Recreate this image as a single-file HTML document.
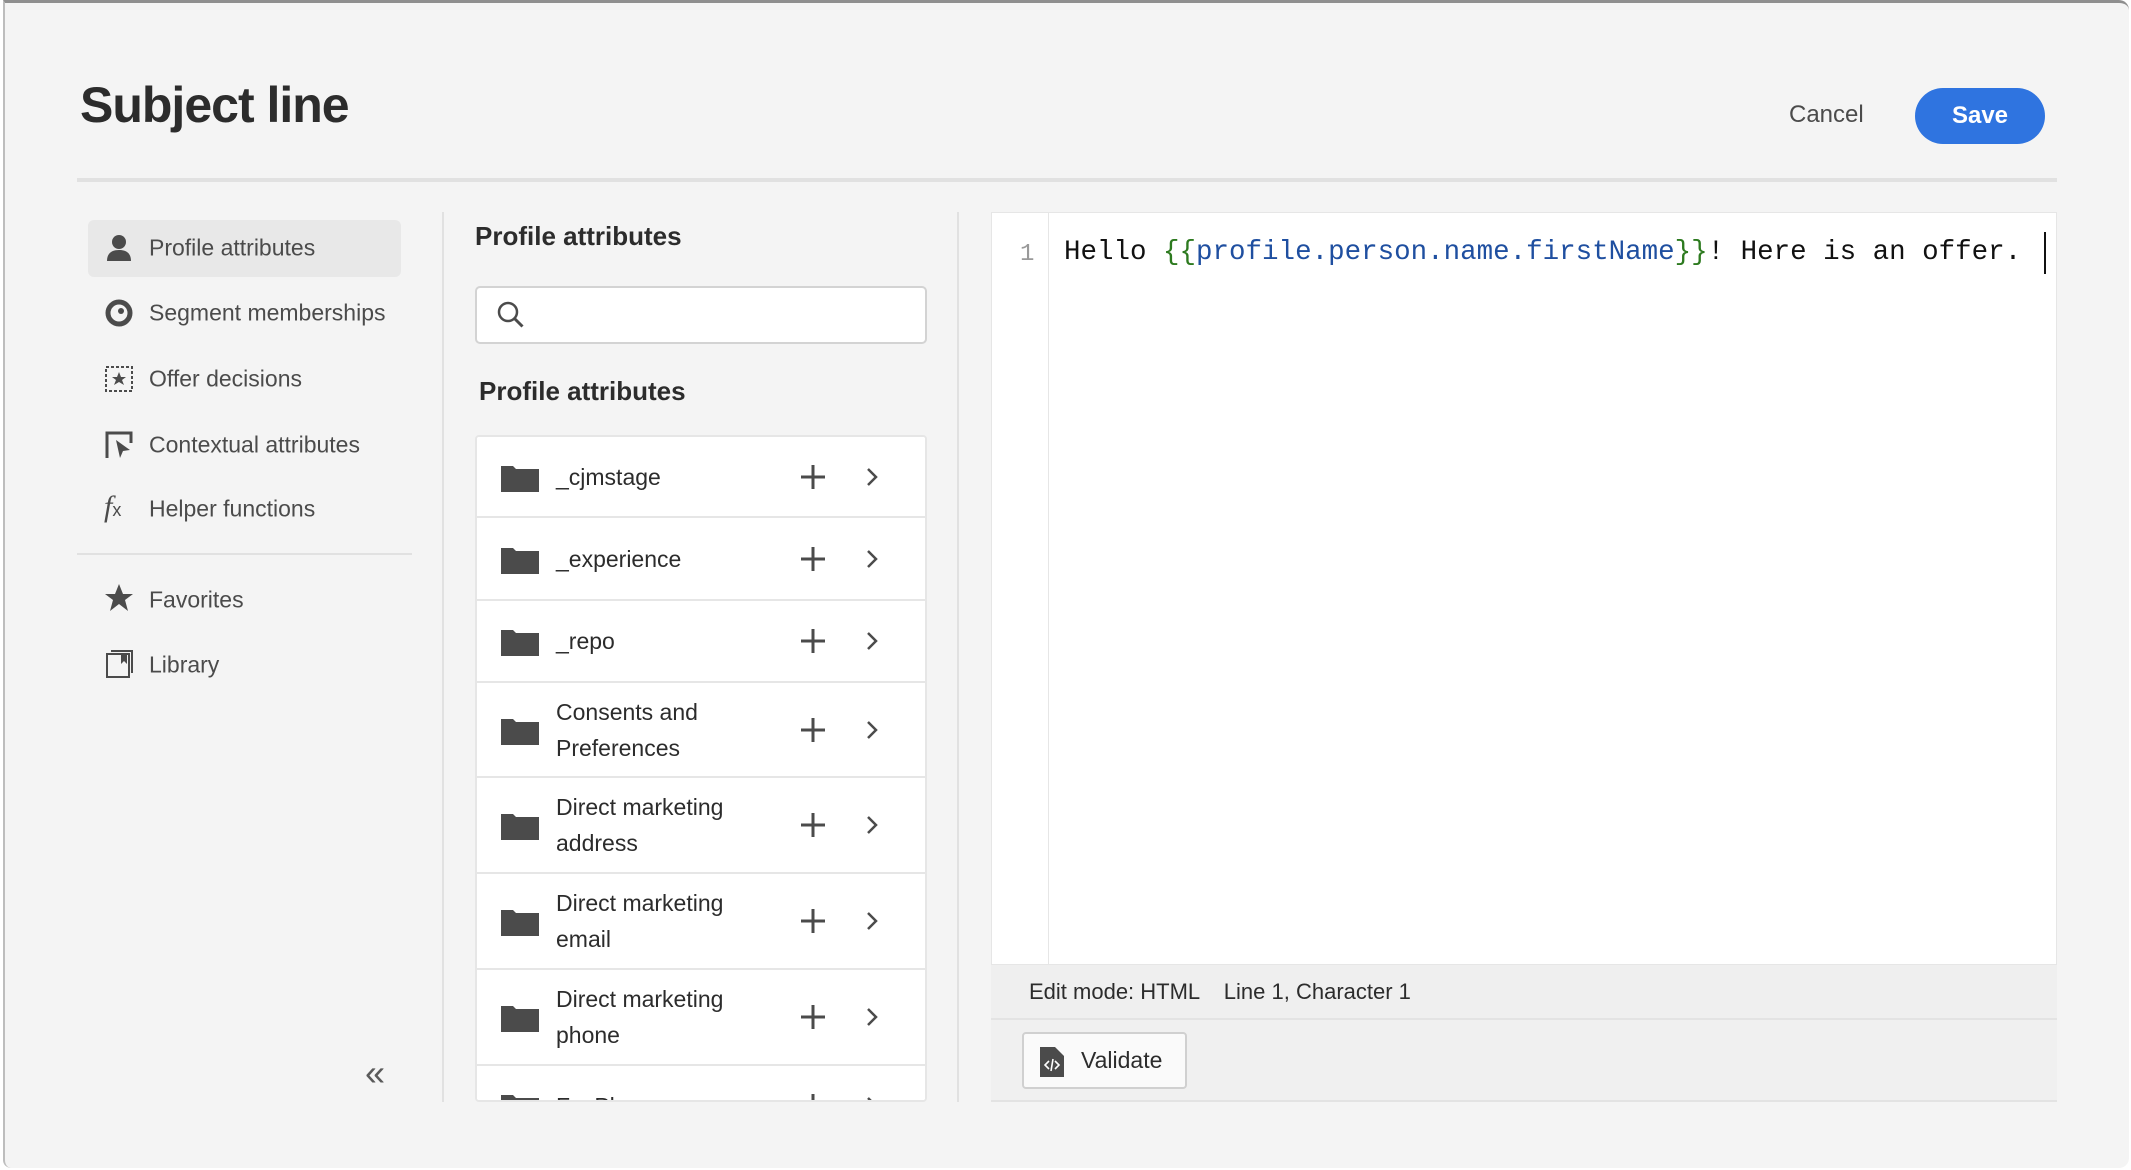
<!DOCTYPE html>
<html><head><meta charset="utf-8"><style>
*{margin:0;padding:0;box-sizing:border-box}
body{width:2131px;height:1170px;overflow:hidden;background:#fff;font-family:"Liberation Sans",sans-serif;position:relative}
.a{position:absolute}
#modal{left:3px;top:0;width:2126px;height:1168px;background:#f4f4f4;border-top:3px solid #8f8f8f;border-left:2px solid #bdbdbd;border-radius:0 10px 10px 8px}
.nav{left:149px;font-size:23px;color:#4b4b4b;transform:translateY(-50%)}
.ic{left:104px;width:30px;height:30px;transform:translateY(-50%)}
.row{position:relative;width:100%;border-bottom:2px solid #e6e6e6;background:#fff}
.rt{position:absolute;left:79px;top:50%;transform:translateY(-50%);font-size:23px;line-height:36px;color:#2c2c2c}
.fold{position:absolute;left:24px;top:50%;margin-top:-15px;width:38px;height:30px}
.plus{position:absolute;left:323px;top:50%;margin-top:-13px;width:26px;height:26px}
.chev{position:absolute;left:388px;top:50%;margin-top:-10px;width:14px;height:20px}
</style></head><body>
<div id="modal" class="a"></div>
<div class="a" style="left:80px;top:76px;font-size:50px;font-weight:bold;color:#2c2c2c;letter-spacing:-1px">Subject line</div>
<div class="a" style="left:1789px;top:101px;font-size:24px;color:#4b4b4b">Cancel</div>
<div class="a" style="left:1915px;top:88px;width:130px;height:56px;border-radius:28px;background:#2f74e0;color:#fff;font-size:24px;font-weight:bold;text-align:center;line-height:56px">Save</div>
<div class="a" style="left:77px;top:178px;width:1980px;height:4px;background:#e1e1e1"></div>

<div class="a" style="left:88px;top:220px;width:313px;height:57px;background:#e8e8e8;border-radius:6px"></div>
<svg class="a ic" style="top:248px" viewBox="0 0 30 30"><circle cx="15" cy="9" r="7" fill="#4b4b4b"/><path d="M3 28c0-8 5-11 12-11s12 3 12 11z" fill="#4b4b4b"/></svg>
<div class="a nav" style="top:248px">Profile attributes</div>
<svg class="a ic" style="top:313px" viewBox="0 0 30 30"><circle cx="15" cy="15" r="11" fill="none" stroke="#4b4b4b" stroke-width="5"/><circle cx="17" cy="13" r="3" fill="#4b4b4b"/></svg>
<div class="a nav" style="top:313px">Segment memberships</div>
<svg class="a ic" style="top:379px" viewBox="0 0 30 30"><rect x="2" y="3" width="26" height="24" fill="none" stroke="#4b4b4b" stroke-width="2" stroke-dasharray="3 2"/><path d="M15 8l2 5h5l-4 3 2 5-5-3-5 3 2-5-4-3h5z" fill="#4b4b4b"/></svg>
<div class="a nav" style="top:379px">Offer decisions</div>
<svg class="a ic" style="top:445px" viewBox="0 0 30 30"><path d="M3 28V3h24v10" fill="none" stroke="#4b4b4b" stroke-width="3"/><path d="M12 10l14 10-7 1-3 7z" fill="#4b4b4b"/></svg>
<div class="a nav" style="top:445px">Contextual attributes</div>
<div class="a" style="left:104px;top:490px;font-size:30px;font-style:italic;font-family:'Liberation Serif',serif;color:#4b4b4b">f<span style="font-size:18px;font-style:normal;font-family:'Liberation Sans'">x</span></div>
<div class="a nav" style="top:509px">Helper functions</div>
<div class="a" style="left:77px;top:553px;width:335px;height:2px;background:#e1e1e1"></div>
<svg class="a ic" style="top:598px" viewBox="0 0 30 30"><path d="M15 1l4 10h10l-8 6 3 11-9-7-9 7 3-11-8-6h10z" fill="#4b4b4b"/></svg>
<div class="a nav" style="top:600px">Favorites</div>
<svg class="a ic" style="top:664px" viewBox="0 0 30 30"><rect x="3" y="5" width="22" height="23" fill="none" stroke="#4b4b4b" stroke-width="2"/><path d="M7 2h21v22" fill="none" stroke="#4b4b4b" stroke-width="2"/><path d="M17 5v10l3-3 3 3V5z" fill="#4b4b4b"/></svg>
<div class="a nav" style="top:665px">Library</div>
<div class="a" style="left:365px;top:1052px;font-size:36px;color:#5a5a5a">«</div>

<div class="a" style="left:442px;top:212px;width:2px;height:890px;background:#e1e1e1"></div>
<div class="a" style="left:957px;top:212px;width:2px;height:890px;background:#e1e1e1"></div>

<div class="a" style="left:475px;top:221px;font-size:26px;font-weight:bold;color:#2c2c2c">Profile attributes</div>
<div class="a" style="left:475px;top:286px;width:452px;height:58px;background:#fff;border:2px solid #d3d3d3;border-radius:5px"></div>
<svg class="a" style="left:496px;top:300px" width="30" height="30" viewBox="0 0 30 30"><circle cx="12" cy="12" r="9" fill="none" stroke="#4b4b4b" stroke-width="2.5"/><path d="M18.5 18.5l8 8" stroke="#4b4b4b" stroke-width="3"/></svg>
<div class="a" style="left:479px;top:376px;font-size:26px;font-weight:bold;color:#2c2c2c">Profile attributes</div>

<div class="a" style="left:475px;top:435px;width:452px;height:667px;background:#fff;border:2px solid #e6e6e6;border-radius:4px;overflow:hidden">
<div class="row" style="height:81px"><svg class="fold" viewBox="0 0 38 30"><path d="M0 4h12l3 3h23v23H0z" fill="#4b4b4b"/></svg><span class="rt">_cjmstage</span><svg class="plus" viewBox="0 0 26 26"><path d="M13 1v24M1 13h24" stroke="#4b4b4b" stroke-width="3"/></svg><svg class="chev" viewBox="0 0 14 20"><path d="M3 2l8 8-8 8" fill="none" stroke="#4b4b4b" stroke-width="2.5"/></svg></div>
<div class="row" style="height:83px"><svg class="fold" viewBox="0 0 38 30"><path d="M0 4h12l3 3h23v23H0z" fill="#4b4b4b"/></svg><span class="rt">_experience</span><svg class="plus" viewBox="0 0 26 26"><path d="M13 1v24M1 13h24" stroke="#4b4b4b" stroke-width="3"/></svg><svg class="chev" viewBox="0 0 14 20"><path d="M3 2l8 8-8 8" fill="none" stroke="#4b4b4b" stroke-width="2.5"/></svg></div>
<div class="row" style="height:82px"><svg class="fold" viewBox="0 0 38 30"><path d="M0 4h12l3 3h23v23H0z" fill="#4b4b4b"/></svg><span class="rt">_repo</span><svg class="plus" viewBox="0 0 26 26"><path d="M13 1v24M1 13h24" stroke="#4b4b4b" stroke-width="3"/></svg><svg class="chev" viewBox="0 0 14 20"><path d="M3 2l8 8-8 8" fill="none" stroke="#4b4b4b" stroke-width="2.5"/></svg></div>
<div class="row" style="height:95px"><svg class="fold" viewBox="0 0 38 30"><path d="M0 4h12l3 3h23v23H0z" fill="#4b4b4b"/></svg><span class="rt">Consents and<br>Preferences</span><svg class="plus" viewBox="0 0 26 26"><path d="M13 1v24M1 13h24" stroke="#4b4b4b" stroke-width="3"/></svg><svg class="chev" viewBox="0 0 14 20"><path d="M3 2l8 8-8 8" fill="none" stroke="#4b4b4b" stroke-width="2.5"/></svg></div>
<div class="row" style="height:96px"><svg class="fold" viewBox="0 0 38 30"><path d="M0 4h12l3 3h23v23H0z" fill="#4b4b4b"/></svg><span class="rt">Direct marketing<br>address</span><svg class="plus" viewBox="0 0 26 26"><path d="M13 1v24M1 13h24" stroke="#4b4b4b" stroke-width="3"/></svg><svg class="chev" viewBox="0 0 14 20"><path d="M3 2l8 8-8 8" fill="none" stroke="#4b4b4b" stroke-width="2.5"/></svg></div>
<div class="row" style="height:96px"><svg class="fold" viewBox="0 0 38 30"><path d="M0 4h12l3 3h23v23H0z" fill="#4b4b4b"/></svg><span class="rt">Direct marketing<br>email</span><svg class="plus" viewBox="0 0 26 26"><path d="M13 1v24M1 13h24" stroke="#4b4b4b" stroke-width="3"/></svg><svg class="chev" viewBox="0 0 14 20"><path d="M3 2l8 8-8 8" fill="none" stroke="#4b4b4b" stroke-width="2.5"/></svg></div>
<div class="row" style="height:96px"><svg class="fold" viewBox="0 0 38 30"><path d="M0 4h12l3 3h23v23H0z" fill="#4b4b4b"/></svg><span class="rt">Direct marketing<br>phone</span><svg class="plus" viewBox="0 0 26 26"><path d="M13 1v24M1 13h24" stroke="#4b4b4b" stroke-width="3"/></svg><svg class="chev" viewBox="0 0 14 20"><path d="M3 2l8 8-8 8" fill="none" stroke="#4b4b4b" stroke-width="2.5"/></svg></div>
<div class="row" style="height:82px"><svg class="fold" viewBox="0 0 38 30"><path d="M0 4h12l3 3h23v23H0z" fill="#4b4b4b"/></svg><span class="rt">FavPhone</span><svg class="plus" viewBox="0 0 26 26"><path d="M13 1v24M1 13h24" stroke="#4b4b4b" stroke-width="3"/></svg><svg class="chev" viewBox="0 0 14 20"><path d="M3 2l8 8-8 8" fill="none" stroke="#4b4b4b" stroke-width="2.5"/></svg></div>
</div>

<div class="a" style="left:991px;top:212px;width:1066px;height:753px;background:#fff;border:1px solid #e6e6e6"></div>
<div class="a" style="left:1048px;top:212px;width:1px;height:753px;background:#e6e6e6"></div>
<div class="a" style="left:1020px;top:241px;font-family:'Liberation Mono',monospace;font-size:24px;color:#999">1</div>
<div class="a" style="left:1064px;top:237px;font-family:'Liberation Mono',monospace;font-size:27.5px;color:#111;white-space:pre">Hello <span style="color:#2d7a1f">{{</span><span style="color:#1f4fa0">profile.person.name.firstName</span><span style="color:#2d7a1f">}}</span>! Here is an offer.</div>
<div class="a" style="left:2044px;top:232px;width:2px;height:42px;background:#111"></div>
<div class="a" style="left:991px;top:965px;width:1066px;height:55px;background:#efefef;border-bottom:2px solid #e3e3e3"></div>
<div class="a" style="left:1029px;top:979px;font-size:22px;color:#2c2c2c;white-space:pre">Edit mode: HTML    Line 1, Character 1</div>
<div class="a" style="left:991px;top:1020px;width:1066px;height:82px;background:#f0f0f0;border-bottom:2px solid #e3e3e3"></div>
<div class="a" style="left:1022px;top:1032px;width:165px;height:57px;background:#fafafa;border:2px solid #d0d0d0;border-radius:4px"></div>
<svg class="a" style="left:1040px;top:1047px" width="24" height="30" viewBox="0 0 24 30"><path d="M0 0h15l9 9v21H0z" fill="#4b4b4b"/><path d="M9 14l-4 4 4 4M15 14l4 4-4 4M13 12l-2 12" fill="none" stroke="#fff" stroke-width="1.6"/></svg>
<div class="a" style="left:1081px;top:1047px;font-size:23px;color:#2c2c2c">Validate</div>
</body></html>
